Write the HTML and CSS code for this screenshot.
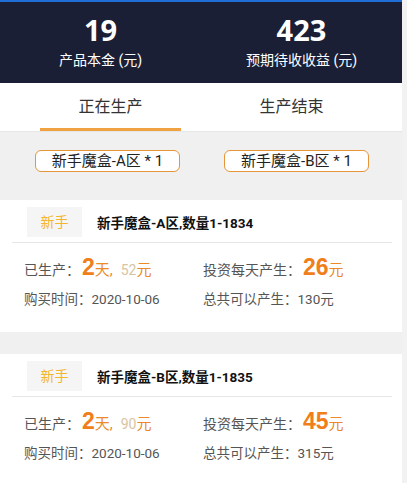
FILE: index.html
```html
<!DOCTYPE html>
<html lang="zh-CN">
<head>
  <meta charset="UTF-8">
  <meta name="viewport" content="width=device-width, initial-scale=1.0">
  <title>我的魔盒</title>
  <link rel="stylesheet" href="styles.css">
</head>
<body>
  <div class="page">
    <div class="summary">
      <div class="stat">
        <div class="stat-num">19</div>
        <div class="stat-label">产品本金 (元)</div>
      </div>
      <div class="stat">
        <div class="stat-num">423</div>
        <div class="stat-label">预期待收收益 (元)</div>
      </div>
    </div>

    <div class="tabs">
      <div class="tab active">
        <span class="tab-text">正在生产</span>
        <div class="tab-bar"></div>
      </div>
      <div class="tab">
        <span class="tab-text">生产结束</span>
        <div class="tab-bar"></div>
      </div>
    </div>

    <div class="tags">
      <div class="tag">新手魔盒-A区 * 1</div>
      <div class="tag">新手魔盒-B区 * 1</div>
    </div>

    <div class="card">
      <div class="card-head">
        <span class="badge">新手</span>
        <span class="card-title">新手魔盒-A区,数量1-1834</span>
      </div>
      <div class="card-body">
        <div class="row big">
          <div class="col">已生产：<b class="num">2</b><span class="unit">天,</span><span class="sum">52</span><span class="unit">元</span></div>
          <div class="col">投资每天产生：<b class="num">26</b><span class="unit">元</span></div>
        </div>
        <div class="row small">
          <div class="col">购买时间：2020-10-06</div>
          <div class="col">总共可以产生：130元</div>
        </div>
      </div>
    </div>

    <div class="card">
      <div class="card-head">
        <span class="badge">新手</span>
        <span class="card-title">新手魔盒-B区,数量1-1835</span>
      </div>
      <div class="card-body">
        <div class="row big">
          <div class="col">已生产：<b class="num">2</b><span class="unit">天,</span><span class="sum">90</span><span class="unit">元</span></div>
          <div class="col">投资每天产生：<b class="num">45</b><span class="unit">元</span></div>
        </div>
        <div class="row small">
          <div class="col">购买时间：2020-10-06</div>
          <div class="col">总共可以产生：315元</div>
        </div>
      </div>
    </div>
  </div>
</body>
</html>
```

FILE: styles.css
```css
/* Base */
body {
  margin: 0;
  background-color: #f2f2f2;
  font-family: Roboto, "Noto Sans CJK SC", sans-serif;
  color: #333;
}
.page {
  width: 402px;
  background-color: #f0f0f0;
}

/* Summary header */
.summary {
  display: flex;
  height: 81px;
  border-top: 2px solid #1f6fd6;
  background-color: #1b1f36;
  color: #ffffff;
}
.stat {
  flex: 1;
  text-align: center;
  padding-top: 12px;
}
.stat-num {
  font-family: "Noto Sans", "Noto Sans CJK SC", sans-serif;
  font-size: 29px;
  font-weight: bold;
  line-height: 32px;
}
.stat-label {
  margin-top: 4px;
  font-size: 14px;
  line-height: 20px;
}

/* Tabs */
.tabs {
  display: flex;
  padding: 0 20px;
  background-color: #ffffff;
  border-bottom: 1px solid #e6e6e6;
}
.tab {
  flex: 1;
  text-align: center;
  padding-top: 12px;
}
.tab-text {
  display: block;
  font-size: 16px;
  line-height: 24px;
  color: #333;
}
.tab-bar {
  height: 3px;
  margin: 9px 20px 0;
}
.tab.active .tab-bar {
  background-color: #f0a142;
}

/* Tags */
.tags {
  display: flex;
  gap: 44px;
  padding: 18px 0 28px 35px;
}
.tag {
  width: 143px;
  height: 20px;
  border: 1px solid #e6953a;
  border-radius: 6px;
  background-color: #ffffff;
  font-size: 15px;
  line-height: 20px;
  text-align: center;
  color: #222;
}

/* Cards */
.card {
  background-color: #ffffff;
  margin-bottom: 22px;
  padding-bottom: 23px;
}
.card-head {
  display: flex;
  align-items: center;
  gap: 15px;
  margin: 0 10px 0 12px;
  padding: 7px 0 5px 15px;
  border-bottom: 1px solid #e6e6e6;
}
.badge {
  width: 55px;
  height: 30px;
  line-height: 30px;
  text-align: center;
  background-color: #f5f5f5;
  color: #f3b62c;
  font-size: 14px;
}
.card-title {
  font-size: 13.5px;
  font-weight: bold;
  color: #111;
}
.card-body {
  padding: 10px 0 0 24px;
}
.row {
  display: flex;
  color: #555;
}
.row .col:first-child {
  width: 179px;
}
.row.big {
  font-size: 14px;
  line-height: 28px;
}
.row.small {
  margin-top: 5px;
  font-size: 13.5px;
  line-height: 20px;
}
.num {
  font-family: "Liberation Sans", Arial, sans-serif;
  font-size: 23px;
  color: #f07e1b;
  margin-left: 2px;
}
.unit {
  color: #ea8a2b;
  font-size: 15px;
}
.sum {
  margin-left: 8px;
  color: #d9c4a2;
  font-size: 14px;
}
```
